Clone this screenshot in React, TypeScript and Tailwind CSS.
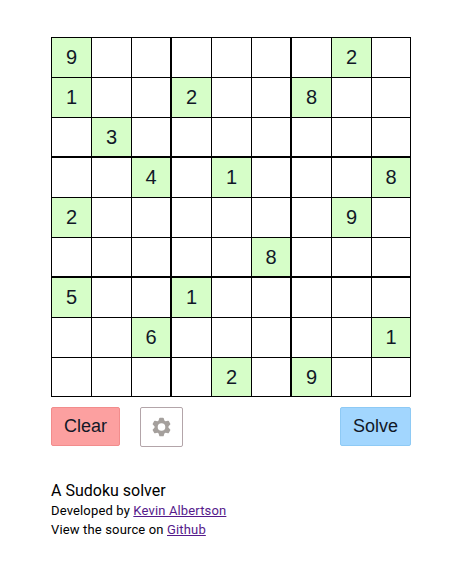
import React from "react";

const PUZZLE: string[] = [
  "9......2.",
  "1..2..8..",
  ".3.......",
  "..4.1...8",
  "2......9.",
  ".....8...",
  "5..1.....",
  "..6.....1",
  "....2.9..",
];

function Cell({ value, row, col }: { value: string; row: number; col: number }) {
  const given = value !== ".";
  return (
    <div
      className={`h-10 w-10 border-l border-t border-black pt-[9px] text-center text-xl leading-5 ${
        given ? "bg-[#d6fec8]" : "bg-white"
      } ${col % 3 === 2 ? "border-r" : ""} ${row % 3 === 2 ? "border-b" : ""}`}
    >
      {given ? value : ""}
    </div>
  );
}

function GearIcon() {
  return (
    <svg width="19" height="20" viewBox="-9.5 -10 19 20" fill="none" stroke="#a5a09d">
      <circle r="5.4" strokeWidth="3.2" />
      {[0, 60, 120, 180, 240, 300].map((a) => (
        <path key={a} d="M-1.5-8.5H1.5L2.1-6.3H-2.1Z" strokeWidth="1.6" strokeLinejoin="round" fill="#a5a09d" transform={`rotate(${a})`} />
      ))}
    </svg>
  );
}

export default function App() {
  return (
    <main className="h-[564px] w-[449px] bg-white pl-[51px] pt-[37px] font-['Liberation_Sans',Arial,sans-serif] text-[#111827]">
      <div className="grid w-[360px] grid-cols-9">
        {PUZZLE.map((line, row) =>
          line.split("").map((v, col) => <Cell key={`${row}-${col}`} value={v} row={row} col={col} />)
        )}
      </div>
      <div className="mt-2.5 flex h-10 w-[360px] items-start">
        <button className="h-[39px] w-[69px] rounded-xs border border-[#f28c8c] bg-[#fca0a0] pb-0.5 text-lg leading-none">Clear</button>
        <button aria-label="Settings" className="ml-5 flex h-10 w-[43px] items-center justify-center rounded-xs border border-[#b3a5a9] bg-white">
          <GearIcon />
        </button>
        <button className="ml-auto h-[39px] w-[71px] rounded-xs border border-[#8ecaf5] bg-[#a2d6fe] pb-0.5 text-lg leading-none">Solve</button>
      </div>
      <footer className="mt-[33px] font-[Roboto,sans-serif] text-[13px] leading-[19px] text-black">
        <h1 className="text-base leading-[21px]">A Sudoku solver</h1>
        <p className="tracking-[0.15px]">
          Developed by <a className="text-[#551a8b] underline">Kevin Albertson</a>
        </p>
        <p className="tracking-[0.15px]">
          View the source on <a className="text-[#551a8b] underline">Github</a>
        </p>
      </footer>
    </main>
  );
}
